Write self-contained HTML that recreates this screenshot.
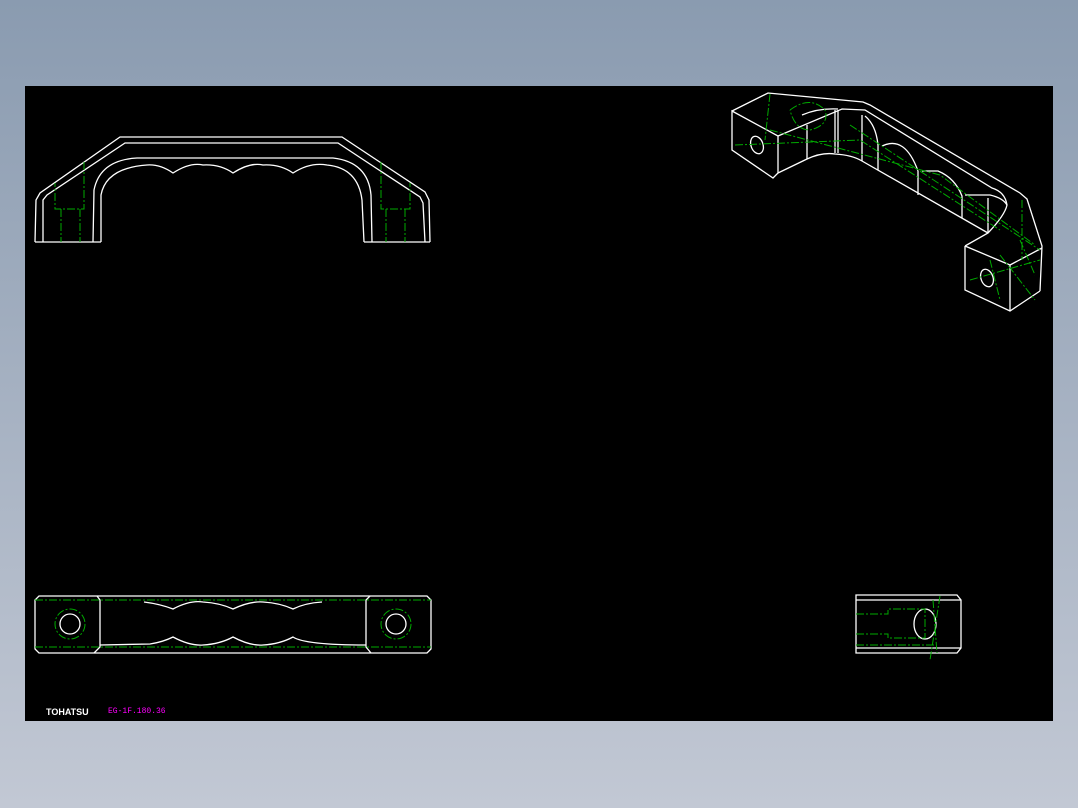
<!DOCTYPE html>
<html><head><style>
html,body{margin:0;padding:0;width:1078px;height:808px;overflow:hidden;background:linear-gradient(#8a9bb0,#c2c8d4);}
svg{position:absolute;left:0;top:0}
</style></head><body>
<svg width="1078" height="808" viewBox="0 0 1078 808" xmlns="http://www.w3.org/2000/svg">
<rect x="25" y="86" width="1028" height="635" fill="#000"/>
<g fill="none" stroke="#fff" stroke-width="1.3">
<!-- front view -->
<path d="M35 242 L36 200 L40 193 L120 137 L342 137 L425 192 L429 200 L430 242"/>
<path d="M43 242 L43 200 L47 195 L125 143 L338 143 L420 197 L423 203 L425 242"/>
<path d="M93 242 L94 190 Q100 160 137 158 L333 158 Q368 162 371 195 L372 242"/>
<path d="M101 242 L101 195 Q106 168 147 165 Q160 164 173 173 Q190 162 203 165 Q220 164 233 173 Q250 162 263 165 Q280 164 293 173 Q310 162 327 165 Q358 168 362 200 L364 242"/>
<path d="M35 242 L101 242 M364 242 L430 242"/>
<!-- bottom view -->
<path d="M39 596 L427 596 L431 600 L431 649 L427 653 L39 653 L35 649 L35 600 Z"/>
<path d="M97 596 L100 600 L100 647 L94 653 M370 596 L366 600 L366 647 L371 653"/>
<path d="M144 602 Q160 604 173 609 Q190 600 203 602 Q220 603 233 609 Q250 601 263 602 Q280 603 293 609 Q305 603 322 602"/>
<path d="M100 645 L150 644 Q163 642 173 637 Q190 646 203 645 Q220 644 233 637 Q250 646 263 645 Q280 644 293 637 Q305 645 366 645"/>
<circle cx="70" cy="624" r="10"/><circle cx="396" cy="624" r="10"/>
<!-- side view -->
<path d="M856 595 L957 595 L961 600 L961 648 L957 653 L856 653 Z M856 600 L961 600 M856 648 L961 648"/>
<ellipse cx="925" cy="624" rx="11" ry="15"/>
<!-- iso -->
<path d="M732 111 L778 136 L778 173 L773 178 L732 150 Z"/>
<path d="M732 111 L768 93 L863 102 L870 105 L1020 193 L1027 199 L1042 246 L1040 291"/>
<path d="M778 136 L842 109 L865 110 L992 188 Q1005 192 1007 205 Q1005 215 988 233 L965 246"/>
<path d="M778 173 L807 159 Q822 152 835 154 Q852 155 862 161 L988 233"/>
<path d="M802 115 Q818 108 838 109 M807 125 L807 159 M835 110 L835 153 M838 110 L838 153 M862 115 L862 161"/>
<path d="M865 116 Q876 125 878 145 L878 170 M882 146 Q905 135 918 171 L918 195 M922 171 L938 171 Q955 178 962 196 L962 218 M965 195 L990 195 Q1003 198 1007 205 M988 198 L988 233"/>
<path d="M965 246 L1010 265 L1042 248 M965 246 L965 290 L1010 311 L1040 291 M1010 265 L1010 311"/>
<ellipse cx="757" cy="145" rx="6" ry="9" transform="rotate(-20 757 145)"/>
<ellipse cx="987" cy="278" rx="6" ry="9" transform="rotate(-20 987 278)"/>
</g>
<g fill="none" stroke="#0a0" stroke-width="1" stroke-dasharray="8 2 2 2">
<path d="M84 162 L84 209 L55 209 L55 183 M61 209 L61 242 M80 209 L80 242"/>
<path d="M381 162 L381 209 L410 209 L410 183 M386 209 L386 242 M405 209 L405 242"/>
<path d="M35 600 L431 600 M35 647 L431 647"/>
<circle cx="70" cy="624" r="15"/><circle cx="396" cy="624" r="15"/>
<path d="M856 614 L888 614 L888 609 L925 609 L925 638 L888 638 L888 634 L856 634 M856 645 L935 645 M933 600 L937 653 M940 596 L930 660"/>
<path d="M770 94 L765 140 M735 145 L860 140 L1000 230 M770 130 L940 175 L1035 245 M790 110 Q810 95 825 110 Q830 125 810 130 Q795 130 790 110 M850 125 L1040 250 M1000 255 L1035 300 M1020 240 L1035 275 M970 280 L1040 260 M1022 200 L1022 260 M990 260 L1000 300"/>
</g>
<text x="46" y="715" font-family="Liberation Sans, sans-serif" font-size="9" font-weight="bold" fill="#fff">TOHATSU</text>
<text x="108" y="713" font-family="Liberation Mono, monospace" font-size="8" fill="#f0f">EG-1F.180.36</text>
</svg>
</body></html>
